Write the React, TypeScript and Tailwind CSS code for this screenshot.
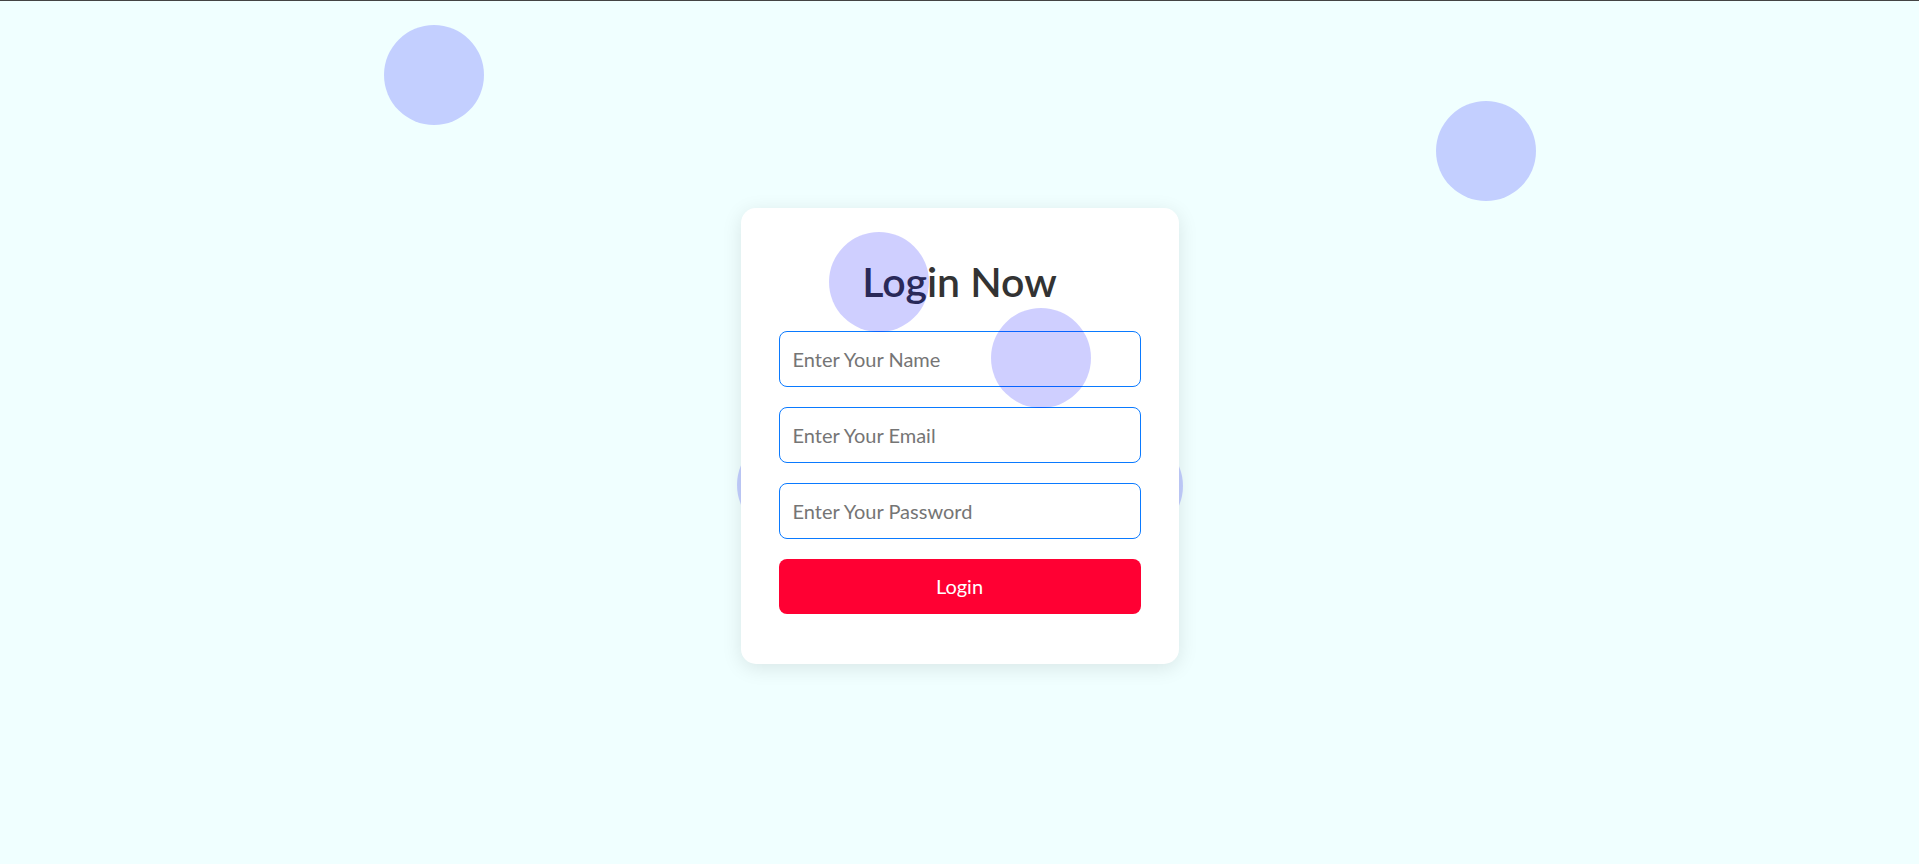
export default function App() {
    return (
        <div
            className="relative h-[864px] overflow-hidden bg-[#f0ffff] border-t border-[#444] flex items-center justify-center"
            style={{ fontFamily: "Lato, 'Open Sans', sans-serif" }}
        >
            {/* floating bubbles behind the card */}
            <div className="absolute left-[384px] top-[24px] w-[100px] h-[100px] rounded-full bg-[#0000ff30]" />
            <div className="absolute left-[1436px] top-[100px] w-[100px] h-[100px] rounded-full bg-[#0000ff30]" />
            <div className="absolute left-[737px] top-[434px] w-[100px] h-[100px] rounded-full bg-[#0000ff30]" />
            <div className="absolute left-[1083px] top-[435px] w-[100px] h-[100px] rounded-full bg-[#0000ff30]" />

            <div className="relative w-[438px] bg-white rounded-[15px] shadow-[0_4px_20px_rgba(0,0,0,0.1)] px-[38px] pt-[50px] pb-[50px] mt-[6px]">
                <h1 className="text-[41px] leading-[48px] font-semibold text-[#333] text-center mb-[25px]">
                    Login Now
                </h1>
                <form className="flex flex-col gap-[20px]" onSubmit={(e) => e.preventDefault()}>
                    <input
                        type="text"
                        placeholder="Enter Your Name"
                        className="h-[56px] w-full border border-[#0a7aff] rounded-[8px] px-[13px] text-[20px] placeholder:text-[#757575] outline-none"
                    />
                    <input
                        type="email"
                        placeholder="Enter Your Email"
                        className="h-[56px] w-full border border-[#0a7aff] rounded-[8px] px-[13px] text-[20px] placeholder:text-[#757575] outline-none"
                    />
                    <input
                        type="password"
                        placeholder="Enter Your Password"
                        className="h-[56px] w-full border border-[#0a7aff] rounded-[8px] px-[13px] text-[20px] placeholder:text-[#757575] outline-none"
                    />
                    <button
                        type="submit"
                        className="h-[55px] w-full bg-[#ff0033] text-white text-[20px] rounded-[8px]"
                    >
                        Login
                    </button>
                </form>
            </div>

            {/* bubbles floating over the card */}
            <div className="absolute left-[829px] top-[231px] w-[100px] h-[100px] rounded-full bg-[#0000ff30]" />
            <div className="absolute left-[991px] top-[307px] w-[100px] h-[100px] rounded-full bg-[#0000ff30]" />
        </div>
    );
}
